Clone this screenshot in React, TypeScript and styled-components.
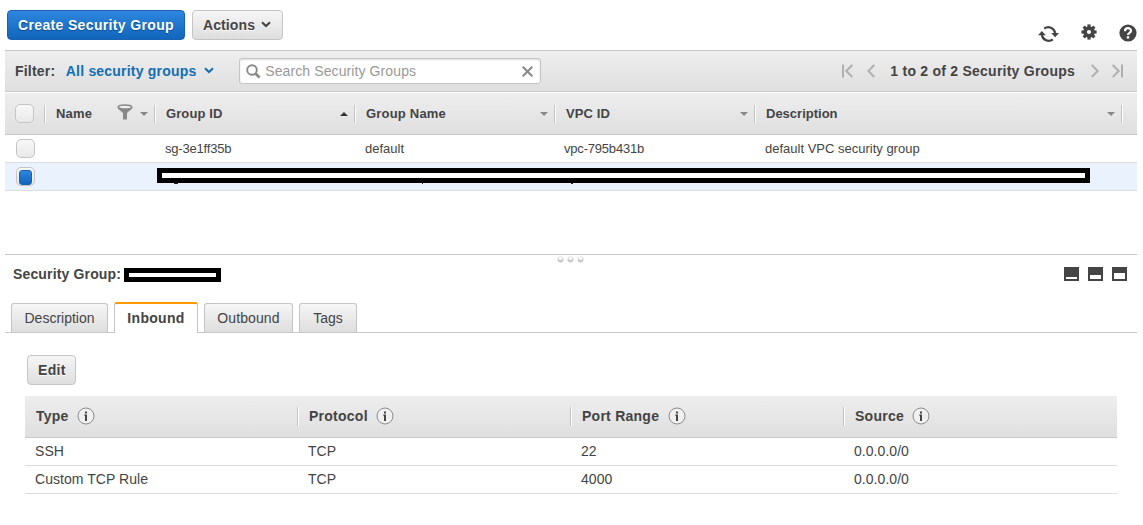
import React from "react";
import styled, { createGlobalStyle, css } from "styled-components";

const Global = createGlobalStyle`
  * { box-sizing: border-box; }
  body { margin: 0; background: #fff; color: #444; font-family: "Liberation Sans", Arial, sans-serif; font-size: 14px; }
  svg { display: block; flex: none; }
`;

const grey = css`background: linear-gradient(#eee, #dfdfdf);`;

const Page = styled.div`
  width: 1132px;
  height: 525px;
  margin-left: 5px;
  display: flex;
  flex-direction: column;
`;

const T = styled.span<{ $ls?: number }>`
  letter-spacing: ${(p) => p.$ls ?? 0}px;
  white-space: pre;
`;

const TopBar = styled.div`
  height: 50px;
  padding: 10px 0 0 2px;
  display: flex;
  align-items: flex-start;
  gap: 7px;
`;

const Button = styled.button<{ $primary?: boolean; $w: number }>`
  width: ${(p) => p.$w}px;
  height: 30px;
  padding: 0 0 0 10px;
  display: flex;
  align-items: center;
  border-radius: 4px;
  border: 1px solid ${(p) => (p.$primary ? "#1a62b0" : "#c5c5c5")};
  background: ${(p) => (p.$primary ? "linear-gradient(#2e86de, #1166bb)" : "linear-gradient(#f6f6f6, #dedede)")};
  color: ${(p) => (p.$primary ? "#fff" : "#444")};
  text-shadow: ${(p) => (p.$primary ? "0 1px 1px #0b4a8f" : "0 1px 0 #fff")};
  font: bold 14px "Liberation Sans", Arial, sans-serif;
  & > svg { margin-bottom: 2px; }
`;

const Tools = styled.div`
  margin-left: auto;
  display: flex;
  align-items: center;
  padding-top: 13px;
  gap: 22px;
  & > :first-child { margin-top: 2px; }
`;

const FilterBar = styled.div`
  ${grey}
  height: 42px;
  border-top: 1px solid #c8c8c8;
  border-bottom: 1px solid #c8c8c8;
  padding-left: 10px;
  display: flex;
  align-items: center;
  font-weight: bold;
`;

const FilterMenu = styled.div`
  color: #146eb4;
  margin-left: 10.5px;
  width: 173.5px;
  display: flex;
  align-items: center;
  gap: 8px;
  & > svg { margin-bottom: 2px; }
`;

const Search = styled.div`
  width: 302px;
  height: 26px;
  border: 1px solid #c5c5c5;
  border-radius: 3px;
  background: #fff;
  box-shadow: inset 0 1px 2px #ddd;
  display: flex;
  align-items: center;
  padding: 0 7px 0 6px;
  gap: 4px;
  color: #999;
  font-weight: normal;
  & > :last-child { margin-left: auto; }
`;

const Pager = styled.div`
  margin-left: auto;
  padding-right: 14px;
  display: flex;
  align-items: center;
`;

const Gap = styled.div<{ $w: number }>`
  width: ${(p) => p.$w}px;
  flex: none;
`;

const GridHead = styled.div`
  ${grey}
  margin-top: 1px;
  height: 42px;
  border-bottom: 1px solid #c8c8c8;
  display: flex;
  align-items: center;
  font-weight: bold;
  font-size: 13px;
`;

const HeadCell = styled.div<{ $w: number }>`
  width: ${(p) => p.$w}px;
  flex: none;
  height: 18px;
  padding-right: 6px;
  padding-left: 11px;
  display: flex;
  align-items: center;
  border-left: 1px solid #c4c4c4;
  box-shadow: inset 1px 0 0 #fff;
  & > svg:last-child { margin-left: auto; }
`;

const HeadFilter = styled.div`
  margin-left: auto;
  display: flex;
  align-items: center;
  gap: 7px;
  & > :first-child { margin-bottom: 3px; }
`;

const CheckCell = styled.div<{ $head?: boolean }>`
  width: ${(p) => (p.$head ? 39 : 40)}px;
  padding-left: ${(p) => (p.$head ? 10 : 11)}px;
  flex: none;
`;

const Check = styled.div<{ $on?: boolean }>`
  width: 19px;
  height: 19px;
  border: 1px solid #c5c5c5;
  border-radius: 5px;
  background: linear-gradient(#f8f8f8, #e9e9e9);
  padding: 2px;
  &::before {
    content: "";
    display: ${(p) => (p.$on ? "block" : "none")};
    height: 13px;
    border: 1px solid #1a62b0;
    border-radius: 3px;
    background: linear-gradient(#2e86de, #1166bb);
  }
`;

const GridRow = styled.div<{ $selected?: boolean }>`
  position: relative;
  height: 28px;
  border-bottom: 1px solid #ddd;
  background: ${(p) => (p.$selected ? "#eaf2fe" : "#fff")};
  display: flex;
  align-items: center;
  font-size: 13px;
`;

const GridCell = styled.div<{ $w: number }>`
  width: ${(p) => p.$w}px;
  flex: none;
`;

const Redaction = styled.div<{ $w: number; $h: number }>`
  width: ${(p) => p.$w}px;
  height: ${(p) => p.$h}px;
  border: 5px solid #000;
  background: #fff;
  flex: none;
`;

const RowCover = styled.div`
  position: absolute;
  left: 152px;
  top: 5px;
`;

const Splitter = styled.div`
  margin-top: 63px;
  border-top: 1px solid #c8c8c8;
  height: 9px;
  display: flex;
  justify-content: center;
  gap: 5px;
  padding: 2px 2px 0 0;
`;

const Dot = styled.i`
  width: 5px;
  height: 5px;
  border-radius: 50%;
  background: radial-gradient(circle at 50% 20%, #fff 20%, #bbb 70%);
  box-shadow: 0 0 0 0.5px #ccc;
`;

const DetailHead = styled.div`
  height: 22px;
  padding: 0 10px 0 8px;
  display: flex;
  align-items: center;
  font-weight: bold;
  & > ${Redaction} { margin-top: 2px; }
`;

const Panes = styled.div`
  margin-left: auto;
  display: flex;
  gap: 9px;
`;

const Pane = styled.div<{ $h: number }>`
  width: 15px;
  height: 14px;
  background: #444;
  padding: 0 2px 2px;
  display: flex;
  align-items: flex-end;
  &::before {
    content: "";
    width: 11px;
    height: ${(p) => p.$h}px;
    background: #fff;
  }
`;

const Tabs = styled.div`
  margin-top: 17px;
  height: 31px;
  padding-left: 6px;
  border-bottom: 1px solid #c8c8c8;
  display: flex;
  align-items: flex-end;
  gap: 6px;
`;

const Tab = styled.div<{ $w: number; $active?: boolean }>`
  width: ${(p) => p.$w}px;
  height: ${(p) => (p.$active ? 31 : 29)}px;
  margin-bottom: ${(p) => (p.$active ? -1 : 0)}px;
  padding-bottom: ${(p) => (p.$active ? 2 : 0)}px;
  border: 1px solid #c5c5c5;
  border-bottom: 0;
  border-top: ${(p) => (p.$active ? "2px solid #f90" : "1px solid #c5c5c5")};
  border-radius: 3px 3px 0 0;
  background: ${(p) => (p.$active ? "#fff" : "linear-gradient(#f6f6f6, #dedede)")};
  font-weight: ${(p) => (p.$active ? "bold" : "normal")};
  display: flex;
  align-items: center;
  justify-content: center;
`;

const Content = styled.div`
  padding: 22px 20px 0;
`;

const EditRow = styled.div`
  padding-left: 2px;
  margin-bottom: 11px;
`;

const Columns = styled.div`
  display: grid;
  grid-template-columns: 272px 273px 273px 274px;
  align-items: center;
`;

const RulesHead = styled(Columns)`
  ${grey}
  height: 42px;
  border-bottom: 1px solid #c8c8c8;
  font-weight: bold;
`;

const RuleHead = styled.div<{ $first?: boolean }>`
  height: 19px;
  padding-left: 11px;
  border-left: ${(p) => (p.$first ? "0" : "1px solid #c4c4c4")};
  box-shadow: ${(p) => (p.$first ? "none" : "inset 1px 0 0 #fff")};
  display: flex;
  align-items: center;
  gap: 8.5px;
  & > span { margin-bottom: 2px; }
  & > svg { margin-bottom: 1px; }
`;

const RuleRow = styled(Columns)`
  height: 28px;
  padding-bottom: 2px;
  border-bottom: 1px solid #ddd;
  & > * { padding-left: 11px; }
  & > :first-child { padding-left: 10px; }
`;

const Chevron = ({ color }: { color: string }) => (
  <svg width="10" height="7" viewBox="0 0 10 7"><path d="M1 1.2L5 5L9 1.2" fill="none" stroke={color} strokeWidth="2" /></svg>
);
const Caret = ({ up }: { up?: boolean }) => (
  <svg width="8" height="4" viewBox="0 0 8 4"><path d={up ? "M0 4L4 0L8 4z" : "M0 0L4 4L8 0z"} fill={up ? "#333" : "#888"} /></svg>
);
const Info = () => (
  <svg width="18" height="18" viewBox="0 0 18 18">
    <circle cx="9" cy="9" r="8" fill="#f0f0f0" stroke="#8c8c8c" strokeWidth="1" />
    <path d="M8 4.5h2v2H8zM7.3 7.5H10V14H8V8.7H7.3z" fill="#444" />
  </svg>
);
const Arrow = ({ end, right }: { end?: boolean; right?: boolean }) => (
  <svg width={end ? 11 : 8} height="14" viewBox={end ? "0 0 11 14" : "0 0 8 14"}>
    <g transform={right ? `translate(${end ? 11 : 8} 0) scale(-1 1)` : undefined} fill="none" stroke="#b0b0b0" strokeWidth="2">
      {end && <path d="M1 0.5V13.5" />}
      <path d={end ? "M10.3 1L4.3 7L10.3 13" : "M7.3 1L1.3 7L7.3 13"} />
    </g>
  </svg>
);
const Refresh = () => (
  <svg width="21" height="18" viewBox="0 0 21 18">
    <path d="M6.2 3.6A6.8 6.8 0 0 1 17.1 8M14.8 14.4A6.8 6.8 0 0 1 3.9 10" fill="none" stroke="#444" strokeWidth="2.2" />
    <path d="M0 10.2L3.9 6L7.8 10.2zM13.2 8L17.1 12.2L21 8z" fill="#444" />
  </svg>
);
const Gear = () => (
  <svg width="16" height="18" viewBox="-8 -8 16 18">
    <g fill="#444">
      {[0, 45, 90, 135].map((a) => <rect key={a} x="-1.6" y="-7.6" width="3.2" height="15.2" transform={`rotate(${a})`} />)}
      <circle r="5.8" />
    </g>
    <circle r="2.1" fill="#fff" />
  </svg>
);
const Help = () => (
  <svg width="18" height="18" viewBox="0 0 18 18">
    <circle cx="9" cy="9" r="8.6" fill="#444" />
    <path d="M6 7.2C6 3.2 12 3.4 12 6.7C12 9 9 8.7 9 11" fill="none" stroke="#fff" strokeWidth="2.2" />
    <rect x="7.8" y="12.2" width="2.4" height="2.3" fill="#fff" />
  </svg>
);
const Lens = () => (
  <svg width="15" height="15" viewBox="0 0 15 15" fill="none" stroke="#888">
    <circle cx="6" cy="6" r="4.8" strokeWidth="1.9" /><path d="M9.5 9.5L13.6 13.4" strokeWidth="2.8" />
  </svg>
);
const Cross = () => (
  <svg width="11" height="11" viewBox="0 0 11 11"><path d="M.7 .7L10.3 10.3M10.3 .7L.7 10.3" stroke="#888" strokeWidth="2" /></svg>
);
const Funnel = () => (
  <svg width="16" height="16" viewBox="0 0 16 16">
    <path d="M.5 3.2C.8 5.8 6 7.6 6 9.5V15.5H10V9.5C10 7.6 15.2 5.8 15.5 3.2z" fill="#888" />
    <ellipse cx="8" cy="3" rx="6.8" ry="2.1" fill="#eee" stroke="#888" strokeWidth="1.5" />
  </svg>
);
const Remnants = () => (
  <svg width="420" height="2" viewBox="0 0 420 2"><path d="M17 0h4v1h-4zM265 0h1v1h-1zM414 0h2v1h-2z" fill="#222" /></svg>
);

const columns = [
  { label: "Group ID", ls: 0.1, w: 200, up: true },
  { label: "Group Name", ls: 0.2, w: 200 },
  { label: "VPC ID", ls: 0.1, w: 200 },
  { label: "Description", ls: 0, w: 367 },
];
const ruleColumns = ["Type", "Protocol", "Port Range", "Source"];
const rules = [
  ["SSH", "TCP", "22", "0.0.0.0/0"],
  ["Custom TCP Rule", "TCP", "4000", "0.0.0.0/0"],
];

export default function App() {
  return (
    <Page>
      <Global />
      <TopBar>
        <Button $primary $w={178}><T $ls={0.35}>Create Security Group</T></Button>
        <Button $w={91}><T $ls={0.1}>Actions</T><Gap $w={6} /><Chevron color="#444" /></Button>
        <Tools><Refresh /><Gear /><Help /></Tools>
      </TopBar>
      <FilterBar>
        <T $ls={0.2}>Filter:</T>
        <FilterMenu><T $ls={0.2}>All security groups</T><Chevron color="#146eb4" /></FilterMenu>
        <Search><Lens /><T $ls={0.1}>Search Security Groups</T><Cross /></Search>
        <Pager>
          <Arrow end /><Gap $w={14} /><Arrow /><Gap $w={15} />
          <T $ls={0.24}>1 to 2 of 2 Security Groups</T>
          <Gap $w={16} /><Arrow right /><Gap $w={13} /><Arrow end right />
        </Pager>
      </FilterBar>
      <GridHead>
        <CheckCell $head><Check /></CheckCell>
        <HeadCell $w={110}>
          <T $ls={0.2}>Name</T>
          <HeadFilter><Funnel /><Caret /></HeadFilter>
        </HeadCell>
        {columns.map((c) => (
          <HeadCell key={c.label} $w={c.w}><T $ls={c.ls}>{c.label}</T><Caret up={c.up} /></HeadCell>
        ))}
        <HeadCell $w={16} />
      </GridHead>
      <GridRow>
        <CheckCell><Check /></CheckCell>
        <GridCell $w={120} />
        <GridCell $w={200}><T $ls={-0.2}>sg-3e1ff35b</T></GridCell>
        <GridCell $w={199}><T>default</T></GridCell>
        <GridCell $w={201}><T $ls={-0.2}>vpc-795b431b</T></GridCell>
        <GridCell $w={300}><T>default VPC security group</T></GridCell>
      </GridRow>
      <GridRow $selected>
        <CheckCell><Check $on /></CheckCell>
        <RowCover><Redaction $w={933} $h={15} /><Remnants /></RowCover>
      </GridRow>
      <Splitter><Dot /><Dot /><Dot /></Splitter>
      <DetailHead>
        <T $ls={0.15}>Security Group:</T><Gap $w={3} /><Redaction $w={97} $h={14} />
        <Panes><Pane $h={2} /><Pane $h={4} /><Pane $h={6} /></Panes>
      </DetailHead>
      <Tabs>
        <Tab $w={97}><T>Description</T></Tab>
        <Tab $w={84} $active><T $ls={0.3}>Inbound</T></Tab>
        <Tab $w={89}><T $ls={0.1}>Outbound</T></Tab>
        <Tab $w={58}><T>Tags</T></Tab>
      </Tabs>
      <Content>
        <EditRow><Button $w={49}><T $ls={0.3}>Edit</T></Button></EditRow>
        <RulesHead>
          {ruleColumns.map((label, i) => (
            <RuleHead key={label} $first={i === 0}><T $ls={0.25}>{label}</T><Info /></RuleHead>
          ))}
        </RulesHead>
        {rules.map((r) => (
          <RuleRow key={r[0]}>{r.map((v, i) => <T key={i} $ls={0.05}>{v}</T>)}</RuleRow>
        ))}
      </Content>
    </Page>
  );
}
